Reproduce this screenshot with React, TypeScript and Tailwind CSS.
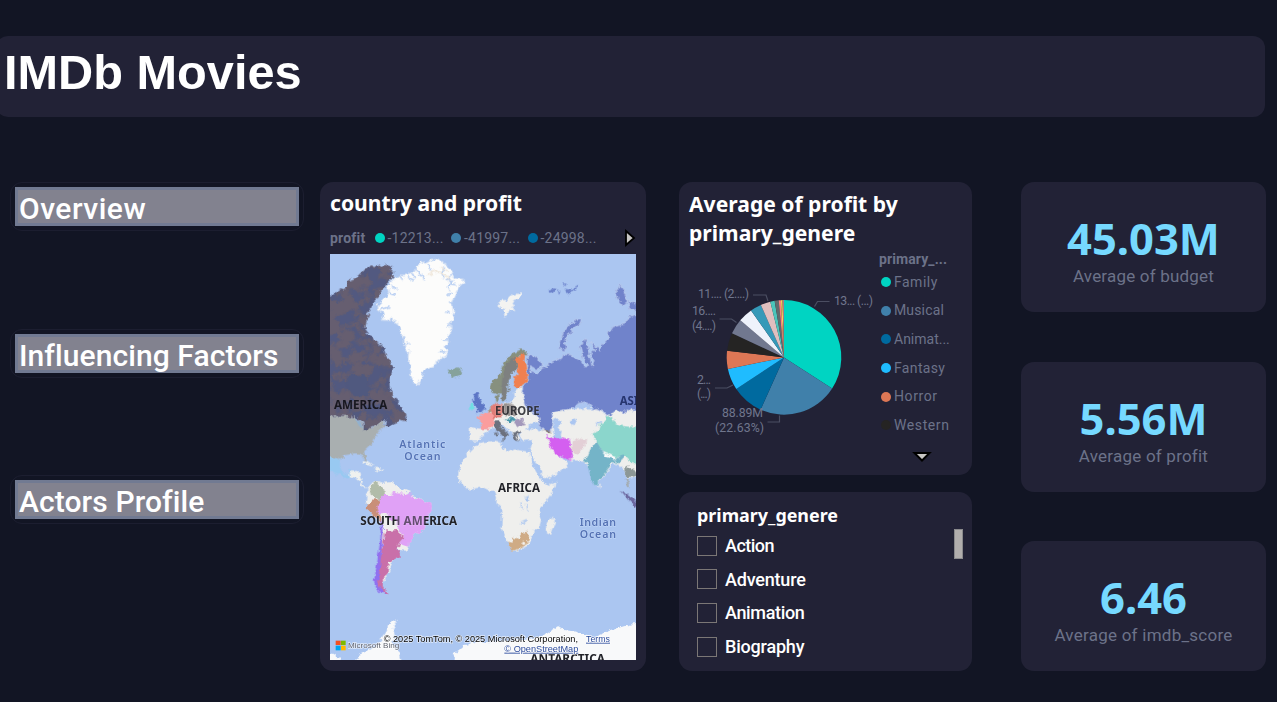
import React from "react";

const din = "font-[Roboto,'Liberation_Sans',sans-serif]";
const segoe = "font-['Noto_Sans','Open_Sans',sans-serif]";

function NavButton({ label, spacing }: { label: string; spacing: string }) {
  return (
    <div className="h-[49px] w-[294px] rounded-xl border border-[#1c1e30] p-1">
      <div className="h-[39px] w-[284px] border-[3px] border-[#717a92] bg-[#82828f]">
        <div className={`${din} ${spacing} whitespace-nowrap pl-[1px] pt-[1px] text-[30px] font-medium leading-[36px] text-white`}>{label}</div>
      </div>
    </div>
  );
}

function Kpi({ value, label, spacing }: { value: string; label: string; spacing: string }) {
  return (
    <div className="flex h-[130px] w-[245px] flex-col items-center rounded-[13px] bg-[#222236] pt-[31px]">
      <div className={`${segoe} text-[43.5px] font-bold leading-[50px] text-[#76d9ff]`}>{value}</div>
      <div className={`${din} ${spacing} mt-px text-[17px] leading-[24px] text-[#6c7289]`}>{label}</div>
    </div>
  );
}

const slices: { end: number; color: string }[] = [
  { end: 122.9, color: "#00d4c2" },
  { end: 204.1, color: "#4080aa" },
  { end: 236.4, color: "#006a9f" },
  { end: 258.2, color: "#1fbcff" },
  { end: 276.6, color: "#dd7755" },
  { end: 294.8, color: "#252423" },
  { end: 310.3, color: "#71788f" },
  { end: 324.9, color: "#eef2fb" },
  { end: 336.2, color: "#3599b8" },
  { end: 346.2, color: "#dfbfbf" },
  { end: 350.6, color: "#4ac5bb" },
  { end: 354.7, color: "#5f6b6d" },
  { end: 356.9, color: "#fb8281" },
  { end: 358.6, color: "#f4d25a" },
  { end: 360, color: "#b07a82" },
];

function Pie() {
  const cx = 105;
  const cy = 107.4;
  const r = 57.3;
  const point = (deg: number) => {
    const a = (deg * Math.PI) / 180;
    return `${(cx + r * Math.sin(a)).toFixed(2)} ${(cy - r * Math.cos(a)).toFixed(2)}`;
  };
  return (
    <svg className="block h-[225px] w-[200px]" viewBox="0 0 200 225">
      {slices.map((s, i) => {
        const start = i ? slices[i - 1].end : 0;
        return <path key={s.end} d={`M${cx} ${cy}L${point(start)}A${r} ${r} 0 0 1 ${point(s.end)}Z`} fill={s.color} />;
      })}
      <g fill="none" stroke="#4b4e62" strokeWidth="1.2">
        <path d="M135.5 56.500l3-5h12" />
        <path d="M74 45h13l2 6" />
        <path d="M40.500 69h12l5 3.500" />
        <path d="M36 138h12l6-3" />
        <path d="M88.500 172h12v-6.500" />
      </g>
      <g fill="#70768d" fontFamily="Roboto, 'Liberation Sans', sans-serif" fontSize="12.300">
        <text x="155" y="55" textLength="39">13... (...)</text>
        <text x="19" y="48" textLength="51">11.... (2....)</text>
        <text x="13" y="65" textLength="24">16....</text>
        <text x="13" y="79.500" textLength="24">(4....)</text>
        <text x="18" y="134" textLength="14">2...</text>
        <text x="18" y="147.500" textLength="14">(...)</text>
        <text x="43" y="167" textLength="41">88.89M</text>
        <text x="36" y="182" textLength="49">(22.63%)</text>
      </g>
    </svg>
  );
}

const canada =
  "M-10 150L38 115L48 118L62 92L80 85L95 72L108 58L130 46L150 50L165 42L185 50L198 65L196 82L182 95L172 108L160 120L155 140L140 150L132 165L128 180L118 190L125 200L115 215L112 235L118 250L130 258L138 270L150 278L160 288L170 300L172 312L183 325L188 340L197 352L190 370L184 390L184 410L190 425L193 440L205 450L218 465L225 480L235 505L230 513L215 508L205 518L185 528L178 530L172 525L178 512L165 512L150 522L130 530L118 542L108 540L105 515L90 505L60 498L-10 498Z";

function MapView() {
  return (
    <svg className="block h-[406px] w-[306px]" viewBox="6 12 918 1218">
      <defs>
        <filter id="terrain" x="0" y="0" width="1" height="1" colorInterpolationFilters="sRGB">
          <feTurbulence type="fractalNoise" baseFrequency="0.026" numOctaves="4" seed="7" />
          <feColorMatrix values="0 0 0 0 .32  0 0 0 0 .35  0 0 0 0 .5  0 7 0 0 -3.2" />
          <feComposite operator="in" in2="SourceGraphic" />
        </filter>
        <filter id="coast" x="-5%" y="-5%" width="110%" height="110%" colorInterpolationFilters="sRGB">
          <feTurbulence type="fractalNoise" baseFrequency="0.07" numOctaves="3" seed="3" result="n" />
          <feDisplacementMap in="SourceGraphic" in2="n" scale="17" xChannelSelector="R" yChannelSelector="G" />
        </filter>
      </defs>
      <rect x="0" y="0" width="930" height="1240" fill="#abc6f1" />
      <g filter="url(#coast)">
        <path fill="#fcfcfb" stroke="#d2dff3" strokeWidth="3" d="M318 25L300 35L280 38L262 50L265 60L245 65L240 75L215 75L195 88L178 108L185 125L175 140L150 165L150 180L170 190L160 210L185 212L190 208L212 220L218 240L228 262L230 290L242 305L240 330L250 345L248 375L255 398L272 402L280 385L285 365L300 352L320 348L330 330L355 318L362 300L350 290L362 280L358 262L372 240L370 215L380 200L375 180L372 150L385 130L395 108L410 98L408 88L380 85L372 70L362 50L345 38L330 28Z" />
        <path fill="none" stroke="#abc6f1" strokeWidth="4" d="M265 62l20 14 5 15M300 42l12 22M240 82l20 10M350 50l-10 20 8 14M372 75l-14 12 12 10M385 105l-22-5M190 108l18 10M185 130l20 6M160 178l24-8M372 130l-14 4M375 160l-12-4M232 282l12-2M360 270l-16 0M355 305l-18-4M215 78l12 14M250 66l10 18M375 90l-14 18 4 14M368 190l-14-4M370 225l-14 2" />
        <path fill="none" stroke="#f0e8dc" strokeWidth="5" d="M300 76l20-12 18 4 20 12 8 10M340 52l16 10" />
        <path fill="#665e70" d={canada} />
        <path filter="url(#terrain)" fill="#000" d={canada} />
        <path fill="#50597f" d="M58 382L75 372L90 378L112 375L120 395L126 420L118 438L95 440L75 432L60 415L52 400Z" />
        <path fill="#a9afb0" d="M-10 498L60 498L85 505L102 515L108 540L125 535L150 522L168 512L172 528L155 540L148 555L140 560L135 580L118 595L108 605L114 622L116 636L108 630L100 612L80 610L62 614L45 616L38 630L20 622L-10 622Z" />
        <path fill="#91b1cf" d="M78 504L98 512L104 536L92 530L86 515Z" />
        <path fill="#98c9f1" d="M-10 622L20 622L38 632L35 650L45 670L62 672L66 660L76 664L70 680L60 685L-10 655Z" />
        <path fill="#eff1ef" d="M64 668L78 664L98 668L100 684L92 690L84 684L66 680ZM92 688L100 692L104 704L118 712L110 714L98 704ZM104 634l18 2 16 12-14-4-20-4zM142 652l24 6-10 6-14-4z" />
        <path fill="#86a29b" d="M360 357L372 362L385 352L402 358L405 368L395 378L380 384L368 378L362 370Z" />
        <path fill="#5c75c5" d="M440 430L452 428L455 445L465 462L472 475L462 488L445 488L450 475L438 460L435 445Z" />
        <path fill="#70dfe4" d="M425 462L438 458L436 476L422 480Z" />
        <path fill="#f3f3f1" d="M510 160L520 150L535 150L545 138L560 132L580 130L578 145L560 150L552 165L562 180L545 178L538 195L528 200L530 180L515 178Z" />
        <path fill="#efefed" d="M480 484L495 470L505 458L521 462L550 458L560 440L558 425L578 410L590 430L600 470L640 480L672 505L650 515L640 528L622 518L606 525L600 532L585 548L570 550L578 568L568 572L550 550L535 535L520 520L500 530L490 540L478 540Z" />
        <path fill="#efefed" d="M426 532L475 538L478 548L460 560L452 572L430 572L424 565Z" />
        <path fill="#fa9d9d" d="M447 502L465 492L478 484L495 492L500 520L490 535L470 538L458 535L460 515Z" />
        <path fill="#e17d77" d="M491 470L505 458L521 462L527 485L522 505L495 506Z" />
        <path fill="#96908f" d="M522 465L545 460L562 465L565 495L530 495Z" />
        <path fill="#a9967d" d="M478 482L490 468L494 484L484 490Z" />
        <path fill="#6c717e" d="M497 515L515 513L518 528L535 545L543 558L535 560L532 572L525 560L505 538L497 528ZM502 545h6v14h-6zM516 569l14-2 0 8zM552 548L572 545L578 550L565 558L572 575L560 570Z" />
        <path fill="#4596ab" d="M534 508L552 502L562 508L550 518L538 516Z" />
        <path fill="#a398bb" d="M562 508L582 504L590 525L570 530L558 518Z" />
        <path fill="#87907f" d="M488 412L494 395L516 375L521 350L536 325L556 308L581 298L599 305L596 318L566 320L568 355L556 365L546 385L540 400L540 425L534 445L522 452L518 430L506 432L491 428ZM500 440L511 430L512 450L502 456Z" />
        <path fill="#7e8080" d="M524 380L534 345L555 322L566 330L568 355L556 365L546 385L540 400L540 425L534 445L522 450L518 425Z" />
        <path fill="#f08051" d="M556 318L576 322L581 308L591 315L589 330L596 360L600 385L588 405L571 415L558 408L559 385L571 370L568 345Z" />
        <g transform="translate(456 0)">
          <path fill="#efefed" d="M120 545L150 535L200 545L205 560L215 590L235 615L265 640L255 655L225 675L205 685L190 680L175 645L155 620L150 600L155 580L155 567L125 570Z" />
          <path fill="#efefed" d="M205 480L480 470L480 685L462 680L452 690L440 685L432 660L420 645L400 640L347 710L325 650L310 632L275 632L240 618L205 560L180 535L200 540Z" />
          <path fill="#abc6f1" d="M218 512L235 505L245 515L235 530L245 545L240 572L225 565L222 540Z" />
          <path fill="#abc6f1" d="M270 513l14-8 6 10-8 10-10-2zM350 517l14-2-2 6-16 4zM368 490l10-6 2 8z" />
          <path fill="#7083cb" stroke="#c8d4ee" strokeWidth="2" d="M143 315L160 318L185 335L188 350L170 358L150 350L155 365L175 372L185 355L200 350L205 338L225 332L245 325L250 314L270 314L290 325L306 337L312 350L326 350L308 320L300 290L316 265L325 290L330 318L336 350L342 335L334 310L345 300L330 280L345 286L358 300L365 285L385 265L385 250L400 230L435 222L440 205L485 185L485 485L440 480L430 490L410 480L390 495L370 485L345 478L320 455L295 460L280 475L250 480L230 485L215 490L220 510L215 540L195 545L175 525L178 505L165 490L140 480L135 455L128 430L132 405L144 385L140 350Z" />
          <path fill="#7083cb" stroke="#c8d4ee" strokeWidth="2" d="M305 205L290 208L265 225L250 245L240 275L235 292L250 302L260 295L255 275L268 250L280 235L300 220ZM408 125L420 103L432 122L442 155L430 165L415 150ZM445 150L468 160L480 180L448 180Z" />
          <path fill="#6c83cc" d="M205 120l16-5 8 4-10 12zM245 102l14-2-2 8zM254 116l20 4 20-16-6 14-26 14zM234 120l8 6-6 4z" />
          <path fill="#887b74" d="M186 540L208 540L214 550L200 547Z" />
          <path fill="#d45ff0" d="M200 555L225 565L245 562L270 570L275 600L280 625L268 630L240 618L222 610L212 590Z" />
          <path fill="#e3cfd6" d="M278 575L300 565L322 570L310 595L290 612L275 605Z" />
          <path fill="#8bd6cc" d="M332 550L355 540L360 522L372 520L380 498L395 500L402 515L415 525L440 530L485 530L485 648L450 635L435 618L410 625L375 610L360 595L350 575Z" />
          <path fill="#74b4c8" d="M335 590L350 572L360 595L375 610L410 628L430 612L432 620L418 640L395 636L385 655L370 675L358 690L355 705L347 710L335 690L325 655L325 640L310 632L325 612Z" />
          <path fill="#fafafa" d="M363 602L378 608L408 622L404 630L376 618Z" />
          <path fill="#f1efec" d="M357 700l6 8-4 6z" />
          <path fill="#8c9796" d="M432 658L445 650L470 665L460 680L440 682Z" />
          <path fill="#abc6f1" d="M447 688L480 672L480 710L455 712Z" />
          <path fill="#a4adb4" d="M438 682L446 690L452 715L440 705Z" />
          <path fill="#6c68a0" d="M422 720L440 730L470 752L470 770L450 756Z" />
        </g>
        <path fill="#efefed" d="M425 605L440 590L460 580L500 575L520 578L520 592L545 605L560 598L600 605L606 620L615 650L630 675L645 695L660 705L685 695L683 710L660 745L640 770L632 790L640 810L635 830L615 845L612 865L600 885L580 900L552 903L540 880L530 855L520 830L522 800L518 770L505 760L507 740L500 722L485 722L465 712L440 715L420 720L405 705L392 690L395 660L402 635Z" />
        <path fill="#abc6f1" d="M590 742l10-4 4 12-10 4zM577 755l4 4 4 24-4-4zM594 762l4 4 4 20-4-6zM578 818l18-8 0 4-16 8z" />
        <path fill="#efefed" d="M676 800L681 815L666 855L654 850L654 830L661 810Z" />
        <path fill="#cfab85" d="M538 875L551 878L551 860L565 865L581 855L596 842L604 852L602 870L586 893L551 903Z" />
        <circle cx="587" cy="877" r="5" fill="#f4f1ec" />
        <g transform="translate(0 600)">
          <path fill="#efefed" d="M118 115L135 95L150 93L160 98L190 97L215 115L245 125L240 135L270 145L305 160L312 180L295 215L285 240L255 255L235 302L213 300L210 290L195 330L178 378L165 400L140 395L148 340L160 280L160 225L130 190L112 165L118 145Z" />
          <path fill="#b1bca9" d="M123 118L140 95L152 95L154 108L168 115L172 140L158 152L130 138Z" />
          <path fill="#c98f79" d="M112 165L130 160L140 148L158 150L148 175L160 195L160 222L130 190Z" />
          <path fill="#e0a1f6" d="M158 150L165 135L190 135L195 123L205 130L235 132L245 128L250 142L275 148L305 160L312 180L295 215L285 240L255 255L240 290L215 282L228 262L210 240L210 215L185 208L175 190L150 190L145 172Z" />
          <path fill="#c970a9" d="M170 245L205 240L212 252L230 262L215 280L212 300L218 318L195 330L182 335L180 355L178 375L165 385L165 410L182 430L165 428L148 400L155 330L165 280Z" />
          <path fill="#9070f0" d="M158 205L167 240L162 290L157 340L150 400L158 415L172 430L158 430L145 415L138 395L148 330L157 270Z" />
          <path fill="#f8f9fa" d="M70 660L92 615L145 590L160 570L175 545L180 525L202 508L206 518L195 535L200 560L195 590L215 610L228 660ZM370 660L380 610L395 598L410 585L455 572L520 575L600 568L650 556L690 528L710 540L745 545L800 560L850 540L900 525L940 520V660Z" />
          <path fill="#f8f9fa" d="M-10 608L18 612L34 625L40 660L-10 660Z" />
        </g>
      </g>
      <g fontFamily="'Noto Sans', sans-serif" fontWeight="700" fontSize="36" fill="#222329" stroke="#ffffff" strokeOpacity=".22" strokeWidth="3" paintOrder="stroke">
        <text x="18" y="476" textLength="160" lengthAdjust="spacingAndGlyphs" fill="#17171f" strokeOpacity="0">AMERICA</text>
        <text x="501" y="495" textLength="134" lengthAdjust="spacingAndGlyphs" fillOpacity=".85">EUROPE</text>
        <text x="875" y="464" textLength="56" lengthAdjust="spacingAndGlyphs" fill="#26346e" strokeOpacity="0">ASI</text>
        <text x="510" y="726" textLength="126" lengthAdjust="spacingAndGlyphs">AFRICA</text>
        <text x="97" y="825" textLength="290" lengthAdjust="spacingAndGlyphs">SOUTH AMERICA</text>
        <text x="607" y="1240" textLength="224" lengthAdjust="spacingAndGlyphs">ANTARCTICA</text>
      </g>
      <path d="M205 790H212V795H290V825H205Z" fill="#e0a1f6" fillOpacity=".35" />
      <g fontFamily="'Noto Sans', sans-serif" fontWeight="600" fontSize="32" fill="#5573b5" stroke="#c4d8f8" strokeWidth="3" paintOrder="stroke">
        <text x="214" y="595" textLength="138">Atlantic</text>
        <text x="229" y="631" textLength="109">Ocean</text>
        <text x="755" y="829" textLength="109">Indian</text>
        <text x="755" y="865" textLength="109">Ocean</text>
      </g>
      <path fill="#f25022" d="M23 1172h15v13H23z" />
      <path fill="#7fba00" d="M39 1172h14v13H39z" />
      <path fill="#00a4ef" d="M23 1187h15v14H23z" />
      <path fill="#ffb900" d="M39 1187h14v14H39z" />
      <g fontFamily="'Liberation Sans', Arial, sans-serif" stroke="#fff" strokeOpacity=".65" strokeWidth="4" paintOrder="stroke">
        <text x="60" y="1195" fontSize="24" fill="#616570" textLength="154" lengthAdjust="spacingAndGlyphs">Microsoft Bing</text>
        <text x="167" y="1175" fontSize="28.500" fill="#000" textLength="583" lengthAdjust="spacingAndGlyphs">© 2025 TomTom, © 2025 Microsoft Corporation,</text>
        <text x="774" y="1175" fontSize="28.500" fill="#2b4a9b" textDecoration="underline" textLength="72" lengthAdjust="spacingAndGlyphs">Terms</text>
        <text x="529" y="1205" fontSize="28.500" fill="#2b4a9b" textDecoration="underline" textLength="222" lengthAdjust="spacingAndGlyphs">© OpenStreetMap</text>
      </g>
    </svg>
  );
}

const mapLegend = [
  { dot: "bg-[#00d4c2]", label: "-12213..." },
  { dot: "bg-[#4080aa]", label: "-41997..." },
  { dot: "bg-[#006a9f]", label: "-24998..." },
];

const pieLegend = [
  { dot: "bg-[#00d4c2]", label: "Family", spacing: "tracking-[0.5px]" },
  { dot: "bg-[#4080aa]", label: "Musical", spacing: "tracking-[0.15px]" },
  { dot: "bg-[#006a9f]", label: "Animat...", spacing: "tracking-[0px]" },
  { dot: "bg-[#1fbcff]", label: "Fantasy", spacing: "tracking-[0.35px]" },
  { dot: "bg-[#dd7755]", label: "Horror", spacing: "tracking-[0.6px]" },
  { dot: "bg-[#252423]", label: "Western", spacing: "tracking-[0.6px]" },
];

const genres = [
  { name: "Action", spacing: "tracking-[-0.55px]" },
  { name: "Adventure", spacing: "tracking-[-0.2px]" },
  { name: "Animation", spacing: "tracking-[-0.35px]" },
  { name: "Biography", spacing: "tracking-[-0.2px]" },
];

export default function App() {
  return (
    <div className="h-[702px] w-[1277px] overflow-hidden bg-[#121524] pt-9">
      <header className="-ml-1 h-[81px] w-[1269px] rounded-xl bg-[#222236] pl-[8px] pt-[8px]">
        <h1 className="font-['Liberation_Sans',Arial,sans-serif] text-[48.700px] font-bold leading-[56px] text-white">IMDb Movies</h1>
      </header>

      <main className="flex pl-[10px] pt-[65px]">
        <nav className="flex w-[310px] flex-col gap-[97.500px]">
          <NavButton label="Overview" spacing="tracking-[0.5px]" />
          <NavButton label="Influencing Factors" spacing="tracking-[0.08px]" />
          <NavButton label="Actors Profile" spacing="tracking-[0.1px]" />
        </nav>

        <section className="h-[489px] w-[326px] rounded-[13px] bg-[#222236] px-[10px] pt-[6px]">
          <h2 className={`${segoe} h-[40px] text-[21.100px] font-bold leading-[30px] text-white`}>country and profit</h2>
          <div className={`${din} flex h-[26px] items-center pb-[6px] text-[14px] text-[#6c7289]`}>
            <span className="w-[44.500px] font-bold tracking-[0.2px]">profit</span>
            {mapLegend.map((item) => (
              <span key={item.label} className="flex w-[76.500px] items-center whitespace-nowrap tracking-[0.2px]">
                <i className={`${item.dot} mr-[3px] size-[10px] rounded-full`} />
                {item.label}
              </span>
            ))}
            <svg className="ml-[19.500px] h-[18px] w-[12px] shrink-0" viewBox="0 0 12 18">
              <path d="M2 2L10 9L2 16Z" fill="#c8c6c4" stroke="#000" strokeWidth="1.8" />
            </svg>
          </div>
          <MapView />
        </section>

        <div className="ml-[33px] flex w-[293px] flex-col gap-[17px]">
          <section className="h-[293px] rounded-[13px] bg-[#222236] pt-[7px]">
            <h2 className={`${segoe} h-[61px] pl-[10px] text-[21.100px] font-bold leading-[29px] text-white`}>
              Average of profit by
              <br />
              primary_genere
            </h2>
            <div className="flex">
              <Pie />
              <div className={`${din} text-[14px] text-[#6c7289]`}>
                <div className="h-[18px] font-bold leading-[18px] tracking-[0.1px]">primary_...</div>
                {pieLegend.map((item) => (
                  <div key={item.label} className={`${item.spacing} flex h-[28.600px] items-center whitespace-nowrap`}>
                    <i className={`${item.dot} ml-[2px] mr-[3px] size-[10px] rounded-full`} />
                    {item.label}
                  </div>
                ))}
                <svg className="ml-[33px] mt-[11px] h-[12px] w-[20px]" viewBox="0 0 20 12">
                  <path d="M2.500 2H17.500L10 9.500Z" fill="#c8c6c4" stroke="#000" strokeWidth="2" />
                </svg>
              </div>
            </div>
          </section>

          <section className="flex h-[179px] justify-between rounded-[13px] bg-[#222236] pl-[18px] pr-[9px] pt-[10px]">
            <div>
              <h2 className={`${segoe} h-[27px] text-[17.900px] font-bold leading-[26px] text-white`}>primary_genere</h2>
              {genres.map((genre) => (
                <label key={genre.name} className={`${din} ${genre.spacing} flex h-[33.600px] items-center gap-2 text-[18px] font-medium text-white`}>
                  <span className="size-5 border border-[#7b7776]" />
                  {genre.name}
                </label>
              ))}
            </div>
            <div className="mt-[27px] h-[30px] w-[9px] border border-[#8a8a8c] bg-[#b1aead]" />
          </section>
        </div>

        <aside className="ml-[49px] flex flex-col gap-[49.500px]">
          <Kpi value="45.03M" label="Average of budget" spacing="tracking-[0.2px]" />
          <Kpi value="5.56M" label="Average of profit" spacing="tracking-[0.22px]" />
          <Kpi value="6.46" label="Average of imdb_score" spacing="tracking-[0.25px]" />
        </aside>
      </main>
    </div>
  );
}
